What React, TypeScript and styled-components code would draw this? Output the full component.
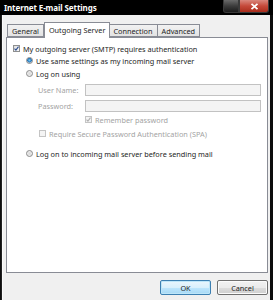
import React from "react";
import styled, { createGlobalStyle } from "styled-components";

const Global = createGlobalStyle`
  html, body { margin: 0; padding: 0; background: #000; }
  body { font-family: "Noto Sans", "Liberation Sans", sans-serif; }
`;

const Window = styled.div`
  width: 273px;
  height: 300px;
  display: flex;
  flex-direction: column;
  background: linear-gradient(90deg, #050505 0px, #2a2a2a 2px, #0c0c0c 100%);
  overflow: hidden;
`;

const TitleBar = styled.div`
  height: 15px;
  flex: none;
  display: flex;
  align-items: flex-start;
  justify-content: space-between;
  background: #000;
`;

const Title = styled.div`
  color: #fff;
  font-weight: bold;
  font-size: 8px;
  line-height: 15px;
  padding-left: 4px;
  letter-spacing: -0.1px;
`;

const Controls = styled.div`
  display: flex;
  margin-right: 4px;
`;

const CtrlButton = styled.div<{ $close?: boolean }>`
  width: ${(p) => (p.$close ? 30 : 16)}px;
  height: 13px;
  box-sizing: border-box;
  border: 1px solid #3a3a3a;
  border-top: none;
  border-radius: 0 0 ${(p) => (p.$close ? "3px 0" : "0 3px")};
  background: ${(p) =>
    p.$close
      ? "linear-gradient(#d9877d, #c5493a 50%, #a92d1c 100%)"
      : "linear-gradient(#6a6a6a, #3c3c3c 50%, #1c1c1c)"};
  display: flex;
  align-items: center;
  justify-content: center;
`;

const Body = styled.div`
  flex: 1;
  margin: 0 3px 0 2px;
  background: #f0f0f0;
  border-left: 1px solid #fafafa;
  display: flex;
  flex-direction: column;
  padding: 7px 0 0 3px;
`;

const TabStrip = styled.div`
  display: flex;
  align-items: flex-end;
  height: 15px;
  margin-left: 1px;
`;

const Tab = styled.div<{ $active?: boolean }>`
  font-size: 7.3px;
  color: #1e1e1e;
  box-sizing: border-box;
  height: ${(p) => (p.$active ? 16 : 13)}px;
  line-height: ${(p) => (p.$active ? 14 : 12)}px;
  padding: 0 4px;
  border: 1px solid #898c95;
  border-bottom: ${(p) => (p.$active ? "none" : "1px solid #898c95")};
  margin-left: ${(p) => (p.$active ? 0 : -1)}px;
  margin-right: ${(p) => (p.$active ? -1 : 0)}px;
  position: relative;
  z-index: ${(p) => (p.$active ? 2 : 1)};
  background: ${(p) => (p.$active ? "#fff" : "linear-gradient(#f2f2f2, #e3e3e3)")};
  margin-bottom: ${(p) => (p.$active ? -1 : 0)}px;
  &:first-child { margin-left: 0; }
`;

const Panel = styled.div`
  height: 236px;
  margin-right: 2px;
  background: #fff;
  border: 1px solid #898c95;
  box-sizing: border-box;
  display: flex;
  flex-direction: column;
  padding: 5px 6px 0 6px;
  font-size: 7.3px;
  color: #1e1e1e;
`;

const Row = styled.div<{ $indent?: number; $top?: number; $disabled?: boolean }>`
  display: flex;
  align-items: center;
  height: 11px;
  margin-left: ${(p) => p.$indent ?? 0}px;
  margin-top: ${(p) => p.$top ?? 0}px;
  color: ${(p) => (p.$disabled ? "#a3a3a3" : "#1e1e1e")};
  white-space: nowrap;
`;

const Box = styled.div<{ $disabled?: boolean }>`
  width: 7px;
  height: 7px;
  box-sizing: border-box;
  border: 1px solid ${(p) => (p.$disabled ? "#c4c4c4" : "#8e8f8f")};
  background: ${(p) => (p.$disabled ? "#f4f4f4" : "linear-gradient(135deg, #dcdcdc, #fbfbfb)")};
  margin-right: 3px;
  flex: none;
  display: flex;
  align-items: center;
  justify-content: center;
`;

const Radio = styled.div<{ $on?: boolean }>`
  width: 7px;
  height: 7px;
  border-radius: 50%;
  box-sizing: border-box;
  border: 1px solid #8a8a8a;
  background: ${(p) =>
    p.$on
      ? "radial-gradient(circle at 50% 45%, #7dd0f5 0px, #1f71b8 2px, #dfe4ea 2.6px)"
      : "radial-gradient(circle at 50% 50%, #d8d8d8, #f7f7f7)"};
  margin-right: 3px;
  flex: none;
`;

const FieldRow = styled.div<{ $top: number }>`
  display: flex;
  align-items: center;
  margin-top: ${(p) => p.$top}px;
  margin-left: 25px;
`;

const FieldLabel = styled.div`
  width: 47px;
  color: #a3a3a3;
`;

const Input = styled.div`
  flex: 1;
  height: 12px;
  box-sizing: border-box;
  border: 1px solid #c2c2c2;
  background: #f4f4f4;
`;

const ButtonRow = styled.div`
  display: flex;
  justify-content: flex-end;
  gap: 6px;
  padding: 7px 2px 0 0;
`;

const Button = styled.div<{ $default?: boolean }>`
  width: 51px;
  height: 15px;
  box-sizing: border-box;
  border: 1px solid ${(p) => (p.$default ? "#3c7fb1" : "#707070")};
  border-radius: 2px;
  box-shadow: inset 0 0 0 1px ${(p) => (p.$default ? "#bde6f9" : "#fbfbfb")};
  background: ${(p) =>
    p.$default
      ? "linear-gradient(#eaf6fd 0%, #d9f0fc 50%, #bee6fd 51%, #a7d9f5 100%)"
      : "linear-gradient(#f2f2f2 0%, #ebebeb 50%, #dddddd 51%, #cfcfcf 100%)"};
  font-size: 7.3px;
  color: #1e1e1e;
  display: flex;
  align-items: center;
  justify-content: center;
`;

const Check = ({ color }: { color: string }) => (
  <svg width="5" height="5" viewBox="0 0 6 6">
    <path d="M0.6 3.2 L2.3 4.9 L5.4 0.8" fill="none" stroke={color} strokeWidth="1.3" />
  </svg>
);

export default function App() {
  return (
    <>
      <Global />
      <Window>
        <TitleBar>
          <Title>Internet E-mail Settings</Title>
          <Controls>
            <CtrlButton />
            <CtrlButton $close>
              <svg width="9" height="7" viewBox="0 0 9 7">
                <path d="M1.5 0.8 L7.5 6.2 M7.5 0.8 L1.5 6.2" stroke="#fff" strokeWidth="1.8" />
              </svg>
            </CtrlButton>
          </Controls>
        </TitleBar>
        <Body>
          <TabStrip>
            <Tab>General</Tab>
            <Tab $active>Outgoing Server</Tab>
            <Tab>Connection</Tab>
            <Tab>Advanced</Tab>
          </TabStrip>
          <Panel>
            <Row>
              <Box>
                <Check color="#2b4c8e" />
              </Box>
              My outgoing server (SMTP) requires authentication
            </Row>
            <Row $indent={13} $top={1}>
              <Radio $on />
              Use same settings as my incoming mail server
            </Row>
            <Row $indent={13} $top={2}>
              <Radio />
              Log on using
            </Row>
            <FieldRow $top={5}>
              <FieldLabel>User Name:</FieldLabel>
              <Input />
            </FieldRow>
            <FieldRow $top={4}>
              <FieldLabel>Password:</FieldLabel>
              <Input />
            </FieldRow>
            <Row $indent={72} $top={2} $disabled>
              <Box $disabled>
                <Check color="#b0b0b0" />
              </Box>
              Remember password
            </Row>
            <Row $indent={26} $top={3} $disabled>
              <Box $disabled />
              Require Secure Password Authentication (SPA)
            </Row>
            <Row $indent={13} $top={9}>
              <Radio />
              Log on to incoming mail server before sending mail
            </Row>
          </Panel>
          <ButtonRow>
            <Button $default>OK</Button>
            <Button>Cancel</Button>
          </ButtonRow>
        </Body>
      </Window>
    </>
  );
}
